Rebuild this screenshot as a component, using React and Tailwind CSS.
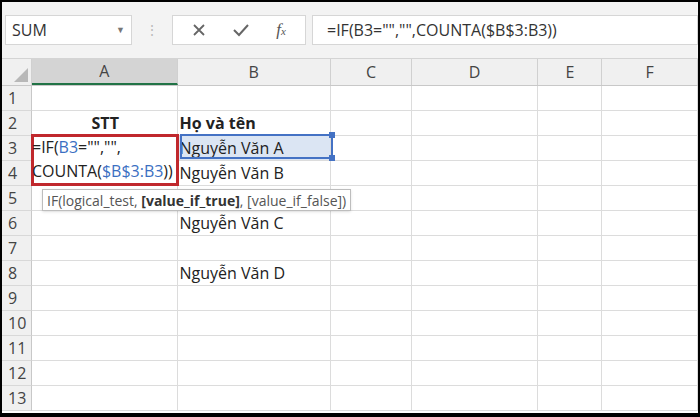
export default function App() {
  const cols = [
    ["A", 146], ["B", 154], ["C", 81], ["D", 127], ["E", 64], ["F", 96],
  ];
  const rows = Array.from({ length: 13 }, (_, i) => i + 1);
  const cellB = { 2: "Họ và tên", 3: "Nguyễn Văn A", 4: "Nguyễn Văn B", 6: "Nguyễn Văn C", 8: "Nguyễn Văn D" };
  return (
    <div className="w-[700px] h-[417px] bg-black p-[2px] pb-[4px] overflow-hidden" style={{ fontFamily: '"Open Sans", "Noto Sans", sans-serif' }}>
      <div className="w-full h-full bg-white flex flex-col overflow-hidden relative">
        <div className="h-[57px] bg-[#f3f3f3] flex items-center pl-[3px] shrink-0 border-b border-[#d4d4d4]">
          <div className="w-[127px] h-[30px] bg-white border border-[#d6d6d6] flex items-center justify-between px-[6px] text-[16px] text-[#333]">
            <span>SUM</span>
            <span className="text-[9px] text-[#777]">▼</span>
          </div>
          <div className="w-[40px] flex justify-center text-[#bbb] text-[14px] leading-none">⋮</div>
          <div className="w-[134px] h-[30px] bg-white border border-[#d6d6d6] flex items-center justify-around px-[6px] text-[#666]">
            <svg width="14" height="14" viewBox="0 0 14 14" stroke="#666" strokeWidth="1.8"><path d="M2 2 L12 12 M12 2 L2 12" /></svg>
            <svg width="18" height="14" viewBox="0 0 18 14" stroke="#666" strokeWidth="2" fill="none"><path d="M2 7 L7 12 L16 2" /></svg>
            <span className="italic text-[17px] text-[#555]" style={{ fontFamily: '"Liberation Serif", serif' }}>f<span className="text-[11px]">x</span></span>
          </div>
          <div className="ml-[6px] flex-1 h-[30px] bg-white border border-[#d6d6d6] flex items-center px-[14px] text-[16px] text-[#333]">
            =IF(B3="","",COUNTA($B$3:B3))
          </div>
        </div>
        <div className="flex h-[27px] shrink-0 bg-[#f0f0f0] border-b border-[#c8c8c8] text-[16px] text-[#444]">
          <div className="w-[30px] border-r border-[#d0d0d0] relative">
            <div className="absolute right-[3px] bottom-[3px] w-0 h-0 border-l-[14px] border-l-transparent border-b-[14px] border-b-[#b8b8b8]" />
          </div>
          {cols.map(([c, w]) => (
            <div key={c} style={{ width: w }} className={`flex items-center justify-center border-r border-[#d0d0d0] ${c === "A" ? "bg-[#d4d4d4] border-b-2 border-b-[#217346]" : ""}`}>{c}</div>
          ))}
        </div>
        {rows.map((r) => (
          <div key={r} className="flex h-[25px] shrink-0 text-[16px] text-[#222]">
            <div className="w-[30px] bg-[#f0f0f0] border-r border-[#c8c8c8] border-b border-b-[#d8d8d8] flex items-center pl-[6px] text-[#444]">{r}</div>
            {cols.map(([c, w]) => (
              <div key={c} style={{ width: w }} className={`border-r border-b border-[#dcdcdc] flex items-center overflow-visible whitespace-nowrap ${c === "B" && r === 3 ? "bg-[#dbe5f3]" : ""} ${c === "A" && r === 2 ? "justify-center font-bold" : ""} ${c === "B" && r === 2 ? "font-bold pl-[2px]" : "pl-[2px]"}`}>
                {c === "A" && r === 2 ? "STT" : c === "B" ? cellB[r] || "" : ""}
              </div>
            ))}
          </div>
        ))}
        <div className="absolute left-[29px] top-[132px] w-[148px] h-[52px] border-[3px] border-[#c0282d] bg-white text-[16px] leading-[24px] text-[#222] whitespace-nowrap overflow-visible">
          <div className="-mt-[2px] -ml-[2px]">=IF(<span className="text-[#3b6fc2]">B3</span>="","",</div>
          <div className="-ml-[2px]">COUNTA(<span className="text-[#3b6fc2]">$B$3:B3</span>))</div>
        </div>
        <div className="absolute left-[178px] top-[132px] w-[153px] h-[25px] border-2 border-[#4472c4]">
          <div className="absolute -right-[4px] -top-[4px] w-[6px] h-[6px] bg-[#4472c4]" />
          <div className="absolute -right-[4px] -bottom-[4px] w-[6px] h-[6px] bg-[#4472c4]" />
        </div>
        <div className="absolute left-[40px] top-[187px] h-[22px] px-[4px] bg-white border border-[#bdbdbd] shadow-sm text-[14px] text-[#555] flex items-center whitespace-nowrap">
          IF(logical_test,&nbsp;<b className="text-[#333]">[value_if_true]</b>, [value_if_false])
        </div>
      </div>
    </div>
  );
}
